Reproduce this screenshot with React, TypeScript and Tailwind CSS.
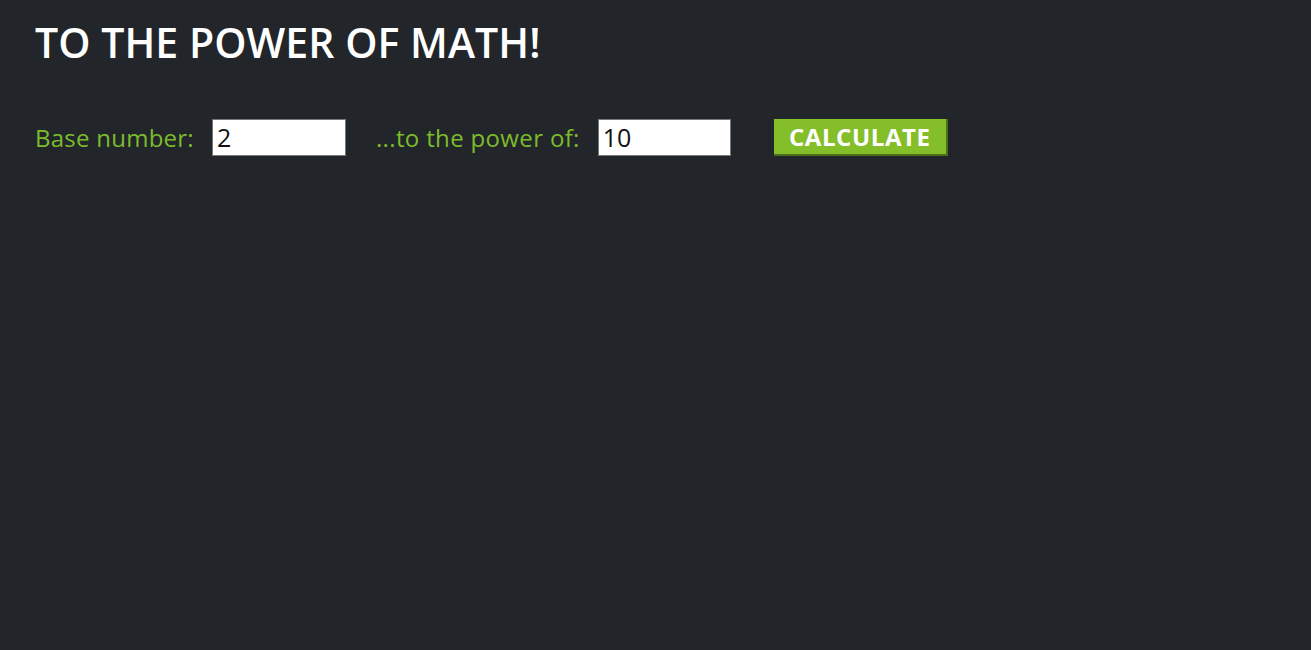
import React from "react";

export default function App() {
  const font = { fontFamily: '"Open Sans", "Noto Sans", sans-serif' };
  return (
    <div
      className="min-h-[650px] w-full bg-[#222529] pl-[35px] pt-[14px]"
      style={font}
    >
      <h1 className="text-[41px] leading-[56px] font-semibold text-white tracking-[0.05px] font-['Open_Sans',sans-serif]">
        TO THE POWER OF MATH!
      </h1>
      <div className="mt-[49px] flex items-center h-[37px]">
        <label className="text-[24px] text-[#7cbc2c] font-['Open_Sans',sans-serif] tracking-[0.25px]">
          Base number:
        </label>
        <input
          type="text"
          defaultValue="2"
          className="ml-[18px] h-[37px] w-[134px] border border-[#767676] bg-white px-[4px] text-[25px] text-[#111] outline-none font-['Open_Sans',sans-serif]"
        />
        <label className="ml-[30px] text-[24px] text-[#7cbc2c] font-['Open_Sans',sans-serif] tracking-[0.35px]">
          ...to the power of:
        </label>
        <input
          type="text"
          defaultValue="10"
          className="ml-[18px] h-[37px] w-[133px] border border-[#767676] bg-white px-[4px] text-[25px] text-[#111] outline-none font-['Open_Sans',sans-serif]"
        />
        <button className="ml-[43px] h-[37px] w-[174px] bg-[#84bf2a] border-r-[2px] border-b-[2px] border-[#4b6e1c] text-[24px] font-bold text-white leading-none tracking-[0.6px] font-['Open_Sans',sans-serif]">
          CALCULATE
        </button>
      </div>
    </div>
  );
}
